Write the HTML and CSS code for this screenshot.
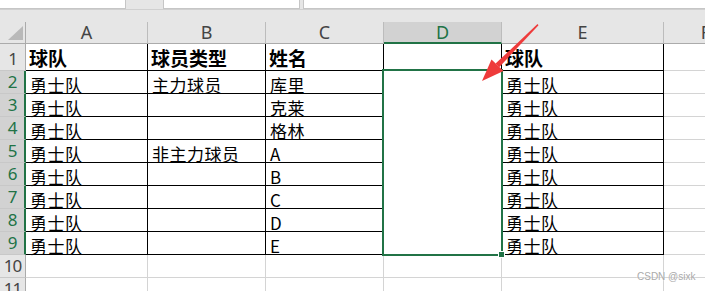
FILE: index.html
```html
<!DOCTYPE html>
<html lang="zh">
<head>
    <meta charset="UTF-8">
    <meta name="viewport" content="width=device-width, initial-scale=1.0">
    <title>球队表</title>
    <link rel="stylesheet" href="styles.css">
</head>
<body>
    <div class="topbar">
        <div class="box name-box"></div>
        <div class="box fx-box"></div>
        <div class="box formula-box"></div>
    </div>

    <div class="sheet">
        <div class="corner"><span class="tri"></span></div>
        <div class="colhead">A</div>
        <div class="colhead">B</div>
        <div class="colhead">C</div>
        <div class="colhead sel">D</div>
        <div class="colhead">E</div>
        <div class="colhead">F</div>

        <div class="rowhead">1</div>
        <div class="cell tb bold">球队</div>
        <div class="cell tb bold">球员类型</div>
        <div class="cell tb bold">姓名</div>
        <div class="cell edge"></div>
        <div class="cell tb bold">球队</div>
        <div class="cell"></div>

        <!-- D2:D9 is taken by the selection box below -->
        <div class="rowhead sel">2</div>
        <div class="cell tb">勇士队</div>
        <div class="cell tb">主力球员</div>
        <div class="cell tb">库里</div>
        <div class="cell tb">勇士队</div>
        <div class="cell"></div>

        <div class="rowhead sel">3</div>
        <div class="cell tb">勇士队</div>
        <div class="cell tb"></div>
        <div class="cell tb">克莱</div>
        <div class="cell tb">勇士队</div>
        <div class="cell"></div>

        <div class="rowhead sel">4</div>
        <div class="cell tb">勇士队</div>
        <div class="cell tb"></div>
        <div class="cell tb">格林</div>
        <div class="cell tb">勇士队</div>
        <div class="cell"></div>

        <div class="rowhead sel">5</div>
        <div class="cell tb">勇士队</div>
        <div class="cell tb">非主力球员</div>
        <div class="cell tb">A</div>
        <div class="cell tb">勇士队</div>
        <div class="cell"></div>

        <div class="rowhead sel">6</div>
        <div class="cell tb">勇士队</div>
        <div class="cell tb"></div>
        <div class="cell tb">B</div>
        <div class="cell tb">勇士队</div>
        <div class="cell"></div>

        <div class="rowhead sel">7</div>
        <div class="cell tb">勇士队</div>
        <div class="cell tb"></div>
        <div class="cell tb">C</div>
        <div class="cell tb">勇士队</div>
        <div class="cell"></div>

        <div class="rowhead sel">8</div>
        <div class="cell tb">勇士队</div>
        <div class="cell tb"></div>
        <div class="cell tb">D</div>
        <div class="cell tb">勇士队</div>
        <div class="cell"></div>

        <div class="rowhead sel">9</div>
        <div class="cell tb">勇士队</div>
        <div class="cell tb"></div>
        <div class="cell tb">E</div>
        <div class="cell tb">勇士队</div>
        <div class="cell"></div>

        <div class="rowhead">10</div>
        <div class="cell"></div>
        <div class="cell"></div>
        <div class="cell"></div>
        <div class="cell"></div>
        <div class="cell"></div>
        <div class="cell"></div>

        <div class="rowhead">11</div>
        <div class="cell"></div>
        <div class="cell"></div>
        <div class="cell"></div>
        <div class="cell"></div>
        <div class="cell"></div>
        <div class="cell"></div>

        <div class="selection"><span class="handle"></span></div>
    </div>

    <svg class="arrow" width="705" height="291" viewBox="0 0 705 291">
        <polygon fill="#ee3b3b" points="537.5,24 538.5,25.2 499.2,67.2 495.6,63.6"/>
        <polygon fill="#ee3b3b" points="482,81 491.5,59.5 503.5,71"/>
    </svg>

    <div class="watermark">CSDN @sixk</div>
</body>
</html>
```

FILE: styles.css
```css
body {
    margin: 0;
    width: 705px;
    height: 291px;
    overflow: hidden;
    background-color: #e6e6e6;
    font-family: "Noto Sans CJK SC", sans-serif;
    position: relative;
}
.topbar {
    height: 22px;
    display: flex;
    align-items: flex-start;
    background: linear-gradient(#e6e6e6 9px, #d0d0d0 9px, #d0d0d0 10px, #e6e6e6 10px);
}
.box {
    height: 9px;
    box-sizing: border-box;
    background: white;
    border: 1px solid #c6c6c6;
    border-top: none;
}
.name-box {
    width: 126px;
    border-left: none;
}
.fx-box {
    width: 137px;
    margin-left: 37px;
}
.formula-box {
    flex: 1;
    margin-left: 3px;
    border-right: none;
}
.sheet {
    display: grid;
    grid-template-columns: 26px 122px 118px 118px 118px 162px 84px;
    grid-template-rows: 22px 27px repeat(10, 23px);
    background: white;
    position: relative;
}
.corner, .colhead, .rowhead, .cell {
    box-sizing: border-box;
}
.corner {
    background: #e6e6e6;
    border-right: 1px solid #ababab;
    border-bottom: 1px solid #ababab;
    padding: 4px 0 0 8px;
}
.tri {
    display: block;
    width: 15px;
    height: 14px;
    background: #b9b9b9;
    clip-path: polygon(100% 0, 100% 100%, 0 100%);
}
.colhead {
    background: #e6e6e6;
    border-right: 1px solid #bcbcbc;
    border-bottom: 1px solid #ababab;
    font-family: "Noto Sans", sans-serif;
    font-size: 18px;
    line-height: 21px;
    color: #444;
    text-align: center;
}
.colhead.sel {
    background: #d2d2d2;
    color: #217346;
    border-bottom: 2px solid #217346;
}
.rowhead {
    background: #e6e6e6;
    border-right: 1px solid #ababab;
    border-bottom: 1px solid #c8c8c8;
    font-family: "Noto Sans", sans-serif;
    font-size: 17px;
    line-height: 20px;
    letter-spacing: -1px;
    color: #444;
    display: flex;
    align-items: flex-end;
    justify-content: center;
    padding-bottom: 1px;
}
.rowhead.sel {
    background: #d2d2d2;
    color: #217346;
    border-right: 2px solid #217346;
}
.cell {
    border-right: 1px solid #d4d4d4;
    border-bottom: 1px solid #d4d4d4;
    font-size: 17px;
    line-height: 17px;
    letter-spacing: 0.5px;
    color: #000;
    display: flex;
    align-items: flex-end;
    padding-left: 4px;
    white-space: nowrap;
}
.cell.tb {
    border-color: #000;
}
.cell.edge {
    border-right-color: #000;
}
.cell.bold {
    font-weight: 700;
    font-size: 19px;
    line-height: 19px;
    letter-spacing: 0;
    padding-left: 3px;
    padding-bottom: 3px;
}
.selection {
    grid-column: 5;
    grid-row: 3 / 11;
    margin: -2px -1px -1px -2px;
    border: 2px solid #217346;
    background: white;
    position: relative;
}
.handle {
    position: absolute;
    right: -4px;
    bottom: -4px;
    width: 5px;
    height: 5px;
    background: #217346;
    border: 1px solid white;
}
.arrow {
    position: absolute;
    left: 0;
    top: 0;
    pointer-events: none;
}
.watermark {
    position: absolute;
    left: 637px;
    top: 271px;
    font-family: "Liberation Sans", sans-serif;
    font-size: 10px;
    color: #aaa;
    text-shadow: 0 0 2px white;
}
```
